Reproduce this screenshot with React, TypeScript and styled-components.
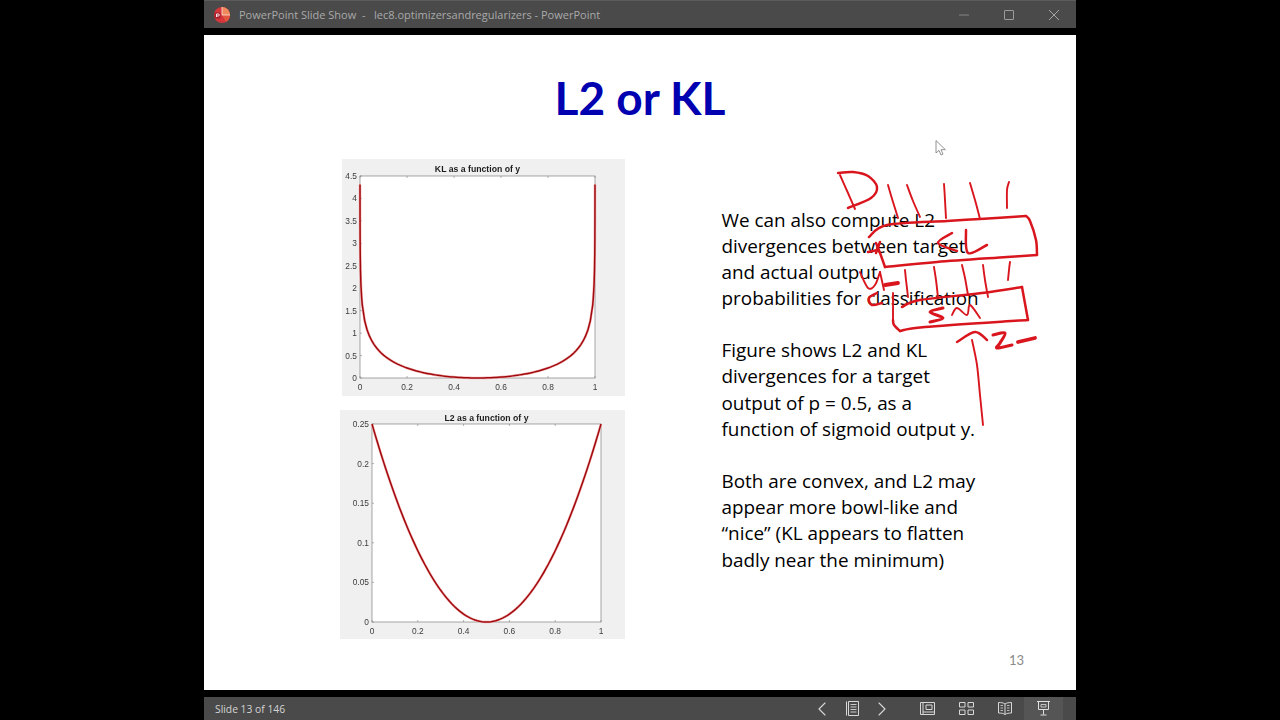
import React from "react";
import styled, { createGlobalStyle } from "styled-components";
import { ChevronLeft, ChevronRight } from "lucide-react";

const GlobalStyle = createGlobalStyle`
  html, body {
    margin: 0;
    height: 100%;
    background: #000;
  }
`;

const Page = styled.div`
  width: 1280px;
  height: 720px;
  background: #000;
  display: flex;
  justify-content: center;
  overflow: hidden;
`;

const Window = styled.div`
  width: 872px;
  height: 720px;
  display: flex;
  flex-direction: column;
`;

const TitleBar = styled.header`
  height: 28px;
  flex: none;
  background: #4a4a4a;
  border-top: 1px solid #5c5c5c;
  box-sizing: border-box;
  display: flex;
  align-items: center;
  padding-left: 9px;
`;

const WindowTitle = styled.span`
  margin-left: 8px;
  font: 11px "Open Sans", sans-serif;
  color: #a9a9a9;
  white-space: pre;
`;

const WindowControls = styled.div`
  margin-left: auto;
  display: flex;
`;

const WindowControl = styled.div`
  width: 45px;
  height: 27px;
  display: flex;
  align-items: center;
  justify-content: center;
`;

const Slide = styled.main`
  flex: 1;
  margin: 7px 0;
  background: #fff;
  position: relative;
  display: flex;
  flex-direction: column;
`;

const SlideTitle = styled.h1`
  margin: 0;
  height: 124px;
  box-sizing: border-box;
  padding-top: 33px;
  text-align: center;
  font: bold 46px/60px Lato, sans-serif;
  color: #0000b0;
`;

const SlideBody = styled.div`
  flex: 1;
  display: flex;
  padding-left: 136px;
  padding-right: 52px;
`;

const ChartColumn = styled.div`
  width: 285px;
  flex: none;
  display: flex;
  flex-direction: column;
  align-items: flex-end;
  gap: 14px;
`;

const ChartPanel = styled.div<{ $w: number; $h: number }>`
  width: ${p => p.$w}px;
  height: ${p => p.$h}px;
  background: #f0f0f0;
`;

const ChartSvg = styled.svg`
  display: block;
  filter: blur(0.3px);
`;

const TextColumn = styled.div`
  flex: 1;
  margin-left: 96.5px;
  padding-top: 47.5px;
  display: flex;
  flex-direction: column;
`;

const Paragraph = styled.p`
  margin: 0 0 26.2px;
  font: 18.9px/26.15px "Open Sans", sans-serif;
  color: #000;
  white-space: pre;
`;

const PageNumber = styled.div`
  margin-top: auto;
  margin-bottom: 21px;
  align-self: flex-end;
  font: 13px/18px Lato, sans-serif;
  color: #8a8a8a;
`;

const InkLayer = styled.svg`
  position: absolute;
  left: 0;
  top: 0;
  pointer-events: none;
  filter: blur(0.3px);
`;

const StatusBar = styled.footer`
  height: 23px;
  flex: none;
  background: #4a4a4a;
  display: flex;
  align-items: center;
  padding: 0 13px 0 11px;
`;

const SlideCount = styled.span`
  font: 10.3px "Open Sans", sans-serif;
  color: #d4d4d4;
`;

const NavGroup = styled.div`
  margin-left: auto;
  margin-right: 11px;
  display: flex;
`;

const NavButton = styled.div`
  width: 30px;
  height: 23px;
  display: flex;
  align-items: center;
  justify-content: center;
  color: #d8d8d8;
`;

const ViewGroup = styled.div`
  display: flex;
`;

const ViewButton = styled.div<{ $active?: boolean }>`
  width: 38.75px;
  height: 23px;
  display: flex;
  align-items: center;
  justify-content: center;
  background: ${p => (p.$active ? "#555" : "transparent")};
`;

type Axis = { left: number; top: number; right: number; bottom: number };

type ChartProps = {
  title: string;
  width: number;
  height: number;
  axis: Axis;
  titleY: number;
  xTicks: string[];
  yTicks: { label: string; value: number }[];
  yMax: number;
  fn: (y: number) => number;
  samples: number[];
};

const Chart: React.FC<ChartProps> = ({ title, width, height, axis, titleY, xTicks, yTicks, yMax, fn, samples }) => {
  const w = axis.right - axis.left;
  const h = axis.bottom - axis.top;
  const px = (v: number) => axis.left + v * w;
  const py = (v: number) => axis.bottom - (v / yMax) * h;
  const d = samples.map((s, i) => `${i ? "L" : "M"}${px(s).toFixed(2)} ${py(fn(s)).toFixed(2)}`).join(" ");

  return (
    <ChartPanel $w={width} $h={height}>
      <ChartSvg width={width} height={height}>
        <rect x={axis.left} y={axis.top} width={w} height={h} fill="#fff" stroke="#808080" strokeWidth="0.7" />
        <text x={(axis.left + axis.right) / 2} y={titleY} textAnchor="middle" fontFamily="Liberation Sans" fontWeight="bold" fontSize="8.7" fill="#1c1c1c">
          {title}
        </text>
        {xTicks.map((t, i) => {
          const x = axis.left + (i / (xTicks.length - 1)) * w;
          return (
            <g key={t}>
              <line x1={x} x2={x} y1={axis.bottom} y2={axis.bottom - 2} stroke="#808080" strokeWidth="0.6" />
              <line x1={x} x2={x} y1={axis.top} y2={axis.top + 2} stroke="#808080" strokeWidth="0.6" />
              <text x={x} y={axis.bottom + 12} textAnchor="middle" fontFamily="Liberation Sans" fontSize="8.4" fill="#3c3c3c">
                {t}
              </text>
            </g>
          );
        })}
        {yTicks.map(t => (
          <g key={t.label}>
            <line x1={axis.left} x2={axis.left + 2} y1={py(t.value)} y2={py(t.value)} stroke="#808080" strokeWidth="0.6" />
            <text x={axis.left - 3} y={py(t.value) + 3} textAnchor="end" fontFamily="Liberation Sans" fontSize="8.4" fill="#3c3c3c">
              {t.label}
            </text>
          </g>
        ))}
        <path d={d} fill="none" stroke="#f3b5b5" strokeWidth="2.6" />
        <path d={d} fill="none" stroke="#a00a0e" strokeWidth="1.5" />
      </ChartSvg>
    </ChartPanel>
  );
};

const klDivergence = (y: number) => -Math.LN2 - 0.5 * Math.log(y * (1 - y));
const l2Divergence = (y: number) => (y - 0.5) * (y - 0.5);

const linear = Array.from({ length: 101 }, (_, i) => i / 100);
const edge = [4.5e-5, 1e-4, 2e-4, 5e-4, 1e-3, 2e-3, 4e-3, 7e-3];
const klSamples = [...edge, ...linear.slice(1, 100), ...edge.map(v => 1 - v).reverse()];

const PowerPointLogo = () => (
  <svg width="18" height="18" viewBox="0 0 18 18">
    <circle cx="9" cy="9" r="8" fill="#d5363c" />
    <path d="M9 1a8 8 0 0 1 8 8H9z" fill="#f08a5c" />
    <path d="M9 9h8a8 8 0 0 1-4 7z" fill="#e2553e" />
    <rect x="1.5" y="6.5" width="6" height="6" rx="0.8" fill="#a81f2c" />
    <path d="M3.5 11V8h1.8a.9.9 0 0 1 0 2H3.5" fill="none" stroke="#fff" strokeWidth="0.9" />
    <path d="M9 1v8h8" fill="none" stroke="#fbe3d8" strokeWidth="0.8" />
  </svg>
);

const MinimizeIcon = () => (
  <svg width="12" height="12" viewBox="0 0 12 12">
    <path d="M1 6h10" stroke="#858585" strokeWidth="1" />
  </svg>
);

const MaximizeIcon = () => (
  <svg width="12" height="12" viewBox="0 0 12 12">
    <rect x="1.5" y="1.5" width="9" height="9" rx="0.5" fill="none" stroke="#9b9b9b" strokeWidth="1" />
  </svg>
);

const CloseIcon = () => (
  <svg width="12" height="12" viewBox="0 0 12 12">
    <path d="M1 1l10 10M11 1L1 11" stroke="#a5a5a5" strokeWidth="1" />
  </svg>
);

const NotesIcon = () => (
  <svg width="13" height="15" viewBox="0 0 13 15" fill="none" stroke="#d8d8d8" strokeWidth="1">
    <path d="M2.5.5h10v14h-10zM.5.5v14" />
    <path d="M4.5 3.5h6M4.5 6h6M4.5 8.5h6M4.5 11h6" strokeWidth="0.9" />
  </svg>
);

const NormalViewIcon = () => (
  <svg width="15" height="13" viewBox="0 0 15 13" fill="none" stroke="#d8d8d8" strokeWidth="1">
    <path d="M.5.5h14v12H.5z" />
    <path d="M3 .5v12M3 10h11.5" />
    <path d="M6 3h6v4.5H6z" />
  </svg>
);

const SorterIcon = () => (
  <svg width="15" height="13" viewBox="0 0 15 13" fill="none" stroke="#d8d8d8" strokeWidth="1">
    <path d="M.5.5h5.5v4.5H.5zM9 .5h5.5v4.5H9zM.5 8h5.5v4.5H.5zM9 8h5.5v4.5H9z" />
  </svg>
);

const ReadingIcon = () => (
  <svg width="14" height="13" viewBox="0 0 14 13" fill="none" stroke="#d8d8d8" strokeWidth="1">
    <path d="M7 2C5.5.8 3 .5.5.5v10.5c2.5 0 5 .3 6.5 1.5 1.5-1.2 4-1.5 6.5-1.5V.5C11 .5 8.5.8 7 2zM7 2v10.5" />
    <path d="M2.5 3.5h2.5M2.5 6h2.5M2.5 8.5h2.5M9 3.5h2.5M9 6h2.5M9 8.5h2.5" strokeWidth="0.8" />
  </svg>
);

const SlideShowIcon = () => (
  <svg width="13" height="15" viewBox="0 0 13 15" fill="none" stroke="#e0e0e0" strokeWidth="1">
    <path d="M0 .5h13M1.5.5v8h10v-8M6.5 8.5v5M3.5 14h6" />
    <path d="M4 3.5h5v2.5H4z" strokeWidth="0.8" />
  </svg>
);

// handwriting on the slide, points are page coordinates
const smooth = (list: number[][]) => {
  const p = list.map(([x, y]) => [x - 204, y - 35]);
  let d = `M${p[0][0]} ${p[0][1]}`;
  for (let i = 0; i < p.length - 1; i++) {
    const a = p[Math.max(i - 1, 0)];
    const b = p[i];
    const c = p[i + 1];
    const e = p[Math.min(i + 2, p.length - 1)];
    const c1x = b[0] + (c[0] - a[0]) / 6;
    const c1y = b[1] + (c[1] - a[1]) / 6;
    const c2x = c[0] - (e[0] - b[0]) / 6;
    const c2y = c[1] - (e[1] - b[1]) / 6;
    d += `C${c1x.toFixed(1)} ${c1y.toFixed(1)} ${c2x.toFixed(1)} ${c2y.toFixed(1)} ${c[0]} ${c[1]}`;
  }
  return d;
};

const INK_THIN = [
  [[840, 175], [848, 193], [855, 209]],
  [[888, 185], [893, 202], [898, 218]],
  [[907, 185], [913, 201], [920, 217]],
  [[944, 184], [945, 200], [946, 218]],
  [[970, 183], [975, 200], [980, 219]],
  [[1009, 182], [1007, 190], [1007, 208]],
  [[905, 270], [906, 280], [908, 297]],
  [[934, 267], [936, 280], [938, 298]],
  [[962, 265], [965, 278], [968, 295]],
  [[983, 265], [985, 280], [988, 297]],
  [[1010, 262], [1009, 270], [1008, 280]],
  [[952, 315], [957, 308], [967, 315], [970, 305], [980, 318]],
  [[972, 340], [977, 365], [980, 395], [983, 425]],
  [[860, 272], [868, 288], [875, 285], [880, 272]],
  [[880, 272], [884, 290]],
  [[893, 293], [893, 320]],
];

const INK_MEDIUM = [
  [[838, 173], [853, 172], [868, 176], [877, 187], [871, 198], [848, 208]],
  [[869, 237], [887, 225], [947, 221], [980, 219], [1026, 216]],
  [[1026, 216], [1030, 221], [1036, 240], [1037, 255]],
  [[1037, 255], [1007, 257], [937, 262], [885, 267]],
  [[885, 267], [880, 253], [876, 243]],
  [[952, 233], [938, 243], [957, 251]],
  [[966, 230], [968, 253], [987, 245]],
  [[880, 242], [876, 253]],
  [[868, 252], [878, 250]],
  [[902, 307], [920, 300], [982, 293], [1022, 287]],
  [[1022, 287], [1028, 320]],
  [[1028, 320], [925, 327], [900, 331]],
  [[900, 331], [894, 325], [893, 320]],
  [[957, 342], [975, 332], [987, 340]],
  [[877, 293], [869, 298], [872, 305], [882, 303]],
];

const INK_THICK = [
  [[943, 308], [930, 312], [943, 318], [930, 322]],
  [[993, 335], [1005, 333], [1000, 343], [997, 348], [1012, 345]],
];

const INK_DASH = [
  [[1018, 342], [1035, 338]],
  [[885, 285], [898, 283]],
];

const InkOverlay = () => (
  <InkLayer width="872" height="655" fill="none" stroke="#d9161e" strokeLinecap="round" strokeLinejoin="round">
    {INK_THIN.map((s, i) => (
      <path key={i} d={smooth(s)} strokeWidth="1.9" />
    ))}
    {INK_MEDIUM.map((s, i) => (
      <path key={i} d={smooth(s)} strokeWidth="2.5" />
    ))}
    {INK_THICK.map((s, i) => (
      <path key={i} d={smooth(s)} strokeWidth="3" />
    ))}
    {INK_DASH.map((s, i) => (
      <path key={i} d={smooth(s)} strokeWidth="3.8" />
    ))}
    <path
      d={`M${936 - 204} ${141 - 35}v12l3-2.6 2 4.6 2-.9-2-4.4h4z`}
      fill="#fff"
      stroke="#777"
      strokeWidth="0.8"
    />
  </InkLayer>
);

const App: React.FC = () => (
  <Page>
    <GlobalStyle />
    <Window>
      <TitleBar>
        <PowerPointLogo />
        <WindowTitle>{"PowerPoint Slide Show  -   lec8.optimizersandregularizers - PowerPoint"}</WindowTitle>
        <WindowControls>
          <WindowControl><MinimizeIcon /></WindowControl>
          <WindowControl><MaximizeIcon /></WindowControl>
          <WindowControl><CloseIcon /></WindowControl>
        </WindowControls>
      </TitleBar>
      <Slide>
        <SlideTitle>L2 or KL</SlideTitle>
        <SlideBody>
          <ChartColumn>
            <Chart
              title="KL as a function of y"
              width={283}
              height={237}
              axis={{ left: 18, top: 17, right: 253, bottom: 219 }}
              titleY={13}
              xTicks={["0", "0.2", "0.4", "0.6", "0.8", "1"]}
              yTicks={["0", "0.5", "1", "1.5", "2", "2.5", "3", "3.5", "4", "4.5"].map(l => ({ label: l, value: Number(l) }))}
              yMax={4.5}
              fn={klDivergence}
              samples={klSamples}
            />
            <Chart
              title="L2 as a function of y"
              width={285}
              height={229}
              axis={{ left: 32, top: 14, right: 261, bottom: 212 }}
              titleY={11}
              xTicks={["0", "0.2", "0.4", "0.6", "0.8", "1"]}
              yTicks={["0", "0.05", "0.1", "0.15", "0.2", "0.25"].map(l => ({ label: l, value: Number(l) }))}
              yMax={0.25}
              fn={l2Divergence}
              samples={linear}
            />
          </ChartColumn>
          <TextColumn>
            <Paragraph>{"We can also compute L2\ndivergences between target\nand actual output\nprobabilities for classification"}</Paragraph>
            <Paragraph>{"Figure shows L2 and KL\ndivergences for a target\noutput of p = 0.5, as a\nfunction of sigmoid output y."}</Paragraph>
            <Paragraph>{"Both are convex, and L2 may\nappear more bowl-like and\n“nice” (KL appears to flatten\nbadly near the minimum)"}</Paragraph>
            <PageNumber>13</PageNumber>
          </TextColumn>
        </SlideBody>
        <InkOverlay />
      </Slide>
      <StatusBar>
        <SlideCount>Slide 13 of 146</SlideCount>
        <NavGroup>
          <NavButton><ChevronLeft size={24} strokeWidth={1.1} /></NavButton>
          <NavButton><NotesIcon /></NavButton>
          <NavButton><ChevronRight size={24} strokeWidth={1.1} /></NavButton>
        </NavGroup>
        <ViewGroup>
          <ViewButton><NormalViewIcon /></ViewButton>
          <ViewButton><SorterIcon /></ViewButton>
          <ViewButton><ReadingIcon /></ViewButton>
          <ViewButton $active><SlideShowIcon /></ViewButton>
        </ViewGroup>
      </StatusBar>
    </Window>
  </Page>
);

export default App;
